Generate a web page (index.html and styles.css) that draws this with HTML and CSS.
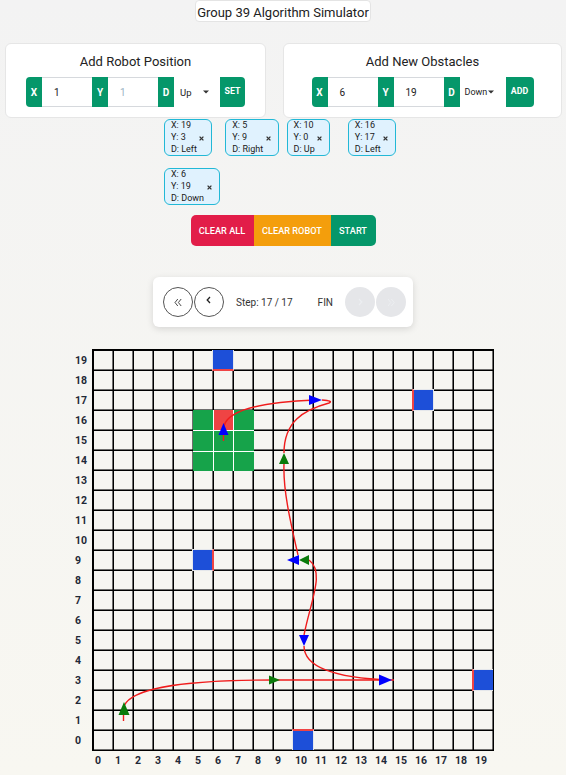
FILE: index.html
```html
<!DOCTYPE html>
<html lang="en">
<head>
<meta charset="utf-8">
<title>Group 39 Algorithm Simulator</title>
<link rel="stylesheet" href="styles.css">
</head>
<body>
<div class="page">
  <header class="title-wrap">
    <h1 class="title">Group 39 Algorithm Simulator</h1>
  </header>

  <section class="forms">
    <div class="card card-left">
      <h2 class="card-title">Add Robot Position</h2>
      <div class="igroup">
        <span class="lbl lbl-first">X</span>
        <span class="inp">1</span>
        <span class="lbl">Y</span>
        <span class="inp inp-faint">1</span>
        <span class="lbl">D</span>
        <span class="sel"><span class="sel-text">Up</span><svg class="caret" width="6" height="4" viewBox="0 0 6 4"><path d="M0 0.5 L6 0.5 L3 3.5 Z" fill="#333"/></svg></span>
        <span class="act act-set">SET</span>
      </div>
    </div>
    <div class="card card-right">
      <h2 class="card-title">Add New Obstacles</h2>
      <div class="igroup">
        <span class="lbl lbl-first">X</span>
        <span class="inp">6</span>
        <span class="lbl">Y</span>
        <span class="inp">19</span>
        <span class="lbl">D</span>
        <span class="sel sel-tight"><span class="sel-text">Down</span><svg class="caret" width="6" height="4" viewBox="0 0 6 4"><path d="M0 0.5 L6 0.5 L3 3.5 Z" fill="#333"/></svg></span>
        <span class="act act-add">ADD</span>
      </div>
    </div>
  </section>

  <section class="chips">
    <div class="chip"><div class="chip-lines"><span>X: 19</span><span>Y: 3</span><span>D: Left</span></div><svg class="chip-x" width="5" height="5" viewBox="0 0 5 5"><path d="M0.6 0.6 L4.4 4.4 M4.4 0.6 L0.6 4.4" stroke="#333" stroke-width="1.3"/></svg></div>
    <div class="chip"><div class="chip-lines"><span>X: 5</span><span>Y: 9</span><span>D: Right</span></div><svg class="chip-x" width="5" height="5" viewBox="0 0 5 5"><path d="M0.6 0.6 L4.4 4.4 M4.4 0.6 L0.6 4.4" stroke="#333" stroke-width="1.3"/></svg></div>
    <div class="chip"><div class="chip-lines"><span>X: 10</span><span>Y: 0</span><span>D: Up</span></div><svg class="chip-x" width="5" height="5" viewBox="0 0 5 5"><path d="M0.6 0.6 L4.4 4.4 M4.4 0.6 L0.6 4.4" stroke="#333" stroke-width="1.3"/></svg></div>
    <div class="chip"><div class="chip-lines"><span>X: 16</span><span>Y: 17</span><span>D: Left</span></div><svg class="chip-x" width="5" height="5" viewBox="0 0 5 5"><path d="M0.6 0.6 L4.4 4.4 M4.4 0.6 L0.6 4.4" stroke="#333" stroke-width="1.3"/></svg></div>
    <div class="chip"><div class="chip-lines"><span>X: 6</span><span>Y: 19</span><span>D: Down</span></div><svg class="chip-x" width="5" height="5" viewBox="0 0 5 5"><path d="M0.6 0.6 L4.4 4.4 M4.4 0.6 L0.6 4.4" stroke="#333" stroke-width="1.3"/></svg></div>
  </section>

  <div class="actions">
    <button class="abtn abtn-red">CLEAR ALL</button>
    <button class="abtn abtn-orange">CLEAR ROBOT</button>
    <button class="abtn abtn-green">START</button>
  </div>

  <div class="stepper">
    <div class="circles">
      <span class="circ"><svg width="8" height="9" viewBox="0 0 8 9"><path d="M3.8 1 L1 4.5 L3.8 8 M7.2 1 L4.4 4.5 L7.2 8" stroke="#333" fill="none" stroke-width="0.9"/></svg></span>
      <span class="circ circ-up"><svg width="5" height="8" viewBox="0 0 5 8"><path d="M4 1 L1.2 4 L4 7" stroke="#222" fill="none" stroke-width="1.3"/></svg></span>
    </div>
    <span class="step-text">Step: 17 / 17</span>
    <span class="fin">FIN</span>
    <div class="circles">
      <span class="circ circ-off"><svg width="5" height="8" viewBox="0 0 5 8"><path d="M1 1 L3.8 4 L1 7" stroke="#eceef1" fill="none" stroke-width="1.2"/></svg></span>
      <span class="circ circ-off"><svg width="8" height="9" viewBox="0 0 8 9"><path d="M1 1 L3.8 4.5 L1 8 M4.4 1 L7.2 4.5 L4.4 8" stroke="#eceef1" fill="none" stroke-width="1"/></svg></span>
    </div>
  </div>

  <div class="board">
    <div class="ylabels">
      <span>19</span><span>18</span><span>17</span><span>16</span><span>15</span><span>14</span><span>13</span><span>12</span><span>11</span><span>10</span>
      <span>9</span><span>8</span><span>7</span><span>6</span><span>5</span><span>4</span><span>3</span><span>2</span><span>1</span><span>0</span>
    </div>
    <div class="grid">
      <div class="obs obs-down" style="grid-column:7;grid-row:1"></div>
      <div class="obs obs-left" style="grid-column:17;grid-row:3"></div>
      <div class="obs obs-right" style="grid-column:6;grid-row:11"></div>
      <div class="obs obs-left" style="grid-column:20;grid-row:17"></div>
      <div class="obs obs-up" style="grid-column:11;grid-row:20"></div>
      <div class="robot" style="grid-column:6 / 9;grid-row:4 / 7">
        <span></span><span class="front"></span><span></span>
        <span></span><span></span><span></span>
        <span></span><span></span><span></span>
      </div>
      <svg class="paths" width="400" height="400" viewBox="0 0 400 400">
        <g fill="none" stroke="#f01c1c" stroke-width="1.4">
          <path d="M30.5 371 L30.5 360"/>
          <path d="M31 356 C40 336 100 330 180 330 L301 330"/>
          <path d="M211 296 C211 318 245 328 297 330"/>
          <path d="M211 285 C218 250 232 222 216 210"/>
          <path d="M205 205 C197 170 190 140 191 114"/>
          <path d="M191 103 C191 72 210 60 236 53 Q241 51 229 50"/>
          <path d="M222 50 C170 52 135 60 131 76"/>
          <path d="M130.5 84 L130.5 91"/>
        </g>
        <g fill="#0a7a0a">
          <polygon points="31,352 25.5,365 36.5,365"/>
          <polygon points="176,325.5 187,330 176,334.5"/>
          <polygon points="216,205 206,210 216,215"/>
          <polygon points="191,103 186,114 196,114"/>
        </g>
        <g fill="#0000ff">
          <polygon points="286,324.5 299,330 286,335.5"/>
          <polygon points="206,285 216,285 211,296"/>
          <polygon points="206,205 194,210 206,215"/>
          <polygon points="216,45 229,50 216,55"/>
          <polygon points="130.5,73 125.5,85 135.5,85"/>
        </g>
      </svg>
    </div>
    <div class="corner"></div>
    <div class="xlabels">
      <span>0</span><span>1</span><span>2</span><span>3</span><span>4</span><span>5</span><span>6</span><span>7</span><span>8</span><span>9</span>
      <span>10</span><span>11</span><span>12</span><span>13</span><span>14</span><span>15</span><span>16</span><span>17</span><span>18</span><span>19</span>
    </div>
  </div>
</div>
</body>
</html>
```

FILE: styles.css
```css
* { box-sizing: border-box; }

html, body { margin: 0; padding: 0; }

body {
  font-family: Roboto, "Noto Sans", sans-serif;
  color: #222;
  background: linear-gradient(#f3f3f3, #f8f7f1);
  min-height: 775px;
}

.page {
  display: flex;
  flex-direction: column;
  align-items: center;
}

/* title */
.title-wrap { display: flex; justify-content: center; }
.title {
  margin: 0;
  font-size: 13px;
  font-weight: 400;
  line-height: 16px;
  padding: 4px 1px 0;
  background: #fff;
  border: 1px solid #e4e4e4;
  border-radius: 4px;
  color: #222;
  white-space: nowrap;
}

/* forms */
.forms {
  display: flex;
  gap: 17px;
  width: 100%;
  padding: 0 4px 0 5px;
  margin-top: 21px;
}
.card {
  background: #fff;
  border: 1px solid #e6e6e6;
  border-radius: 6px;
  padding: 9px 0 10px;
  display: flex;
  flex-direction: column;
  align-items: center;
}
.card-left { width: 261px; }
.card-right { width: 279px; }
.card-title {
  margin: 0;
  font-size: 13px;
  font-weight: 400;
  line-height: 18px;
  color: #222;
}
.igroup {
  display: flex;
  height: 30px;
  margin-top: 6px;
}
.lbl {
  width: 16px;
  background: #05976a;
  color: #fff;
  font-size: 10px;
  font-weight: 700;
  display: flex;
  align-items: center;
  justify-content: center;
}
.lbl-first { border-radius: 4px 0 0 4px; }
.inp {
  width: 50px;
  border-top: 1px solid #d6d9dd;
  border-bottom: 1px solid #d6d9dd;
  font-size: 10px;
  color: #222;
  display: flex;
  align-items: center;
  padding-left: 12px;
}
.inp-faint { color: #9bb3c4; }
.sel {
  width: 46px;
  display: flex;
  align-items: center;
  padding-left: 6px;
  font-size: 9.5px;
  color: #222;
  white-space: nowrap;
}
.sel .caret { margin-left: auto; margin-right: 11px; flex: none; }
.sel-tight { padding-left: 5px; font-size: 9px; }
.sel-tight .caret { margin-left: 1px; }
.act {
  background: #05976a;
  color: #fff;
  font-size: 8.8px;
  font-weight: 700;
  display: flex;
  align-items: center;
  justify-content: center;
  border-radius: 0 4px 4px 0;
  padding-bottom: 2px;
}
.act-set { width: 25px; }
.act-add { width: 28px; }

/* obstacle chips */
.chips {
  display: grid;
  grid-template-columns: repeat(4, 61.3px);
  row-gap: 11.7px;
  justify-content: center;
  width: 100%;
  padding-left: 7px;
  margin-top: 1px;
}
.chip {
  justify-self: start;
  display: flex;
  align-items: center;
  gap: 2.5px;
  background: #e0f2fe;
  border: 1px solid #22b8d6;
  border-radius: 6px;
  padding: 0 7px 0 6px;
  font-size: 9px;
  line-height: 11.8px;
  color: #1a1a1a;
  white-space: nowrap;
}
.chip-lines { display: flex; flex-direction: column; }
.chip-x { flex: none; margin-top: 1px; }

/* action buttons */
.actions {
  display: flex;
  margin-top: 10px;
  border-radius: 5px;
  overflow: hidden;
}
.abtn {
  border: 0;
  height: 31px;
  font-family: inherit;
  font-size: 9.2px;
  font-weight: 500;
  color: #fff;
  padding: 0;
  white-space: nowrap;
}
.abtn-red { background: #e21d49; width: 63px; }
.abtn-orange { background: #f49e0c; width: 77px; }
.abtn-green { background: #05976a; width: 45px; }

/* stepper */
.stepper {
  margin-top: 31px;
  width: 260px;
  height: 50px;
  background: #fff;
  border-radius: 6px;
  box-shadow: 0 2px 7px rgba(0, 0, 0, 0.13);
  display: flex;
  align-items: center;
  padding: 0 10px;
  font-size: 10px;
  color: #333;
  white-space: nowrap;
}
.circles { display: flex; gap: 1px; }
.circ {
  width: 30px;
  height: 30px;
  border: 1px solid #555;
  border-radius: 50%;
  display: flex;
  align-items: center;
  justify-content: center;
}
.circ-up svg { margin-top: -4px; margin-left: -1px; }
.circ-off { border-color: transparent; background: #e5e6e9; }
.step-text { margin-left: 12px; }
.fin { margin-left: 25px; margin-right: 12px; }

/* board */
.board {
  margin-top: 23px;
  display: grid;
  grid-template-columns: 20px 400px;
  grid-template-rows: 400px 20px;
}
.ylabels {
  display: grid;
  grid-template-rows: repeat(20, 20px);
}
.ylabels span,
.xlabels span {
  font-size: 10.5px;
  font-weight: 700;
  color: #1f2937;
  display: flex;
  align-items: center;
  padding-left: 2px;
}
.xlabels {
  display: grid;
  grid-template-columns: repeat(20, 20px);
}
.grid {
  position: relative;
  display: grid;
  grid-template-columns: repeat(20, 20px);
  grid-template-rows: repeat(20, 20px);
  outline: 1px solid #000;
  background-color: #f6f5f1;
  background-image:
    linear-gradient(to right, #000 0 1px, transparent 1px 19px, rgba(0, 0, 0, 0.55) 19px),
    linear-gradient(to bottom, #000 0 1px, transparent 1px 19px, rgba(0, 0, 0, 0.55) 19px);
  background-size: 20px 20px;
}
.obs {
  margin: -1px;
  background: #1d4fd8;
  border: 1px solid #e5e7eb;
}
.obs-down { border-bottom: 2px solid #ef4444; }
.obs-up { border-top: 2px solid #ef4444; }
.obs-left { border-left: 2px solid #ef4444; }
.obs-right { border-right: 2px solid #ef4444; }
.robot {
  display: grid;
  grid-template-columns: repeat(3, 1fr);
  grid-template-rows: repeat(3, 1fr);
  gap: 1px;
  background: #fff;
  margin: 0 -1px -1px 0;
}
.robot span { background: #16a34a; }
.robot .front { background: #ef4444; }
.paths {
  position: absolute;
  left: 0;
  top: 0;
  overflow: visible;
  pointer-events: none;
}
```
